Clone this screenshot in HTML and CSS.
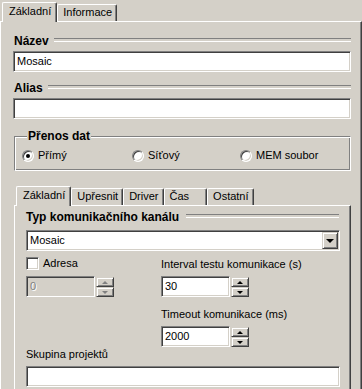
FILE: index.html
```html
<!DOCTYPE html>
<html lang="cs">

<head>
    <meta charset="utf-8">
    <meta name="viewport" content="width=device-width, initial-scale=1.0">
    <title>Kanál - vlastnosti</title>
    <link rel="stylesheet" href="styles.css">
</head>

<body>
    <div class="tabs">
        <div class="tab active">Základní</div>
        <div class="tab">Informace</div>
    </div>

    <div class="page outer">
        <div class="caption">Název</div>
        <div class="edit">Mosaic</div>

        <div class="caption alias">Alias</div>
        <div class="edit"></div>

        <fieldset class="group">
            <legend>Přenos dat</legend>
            <label class="radio"><span class="dot checked"></span>Přímý</label>
            <label class="radio"><span class="dot"></span>Síťový</label>
            <label class="radio"><span class="dot"></span>MEM soubor</label>
        </fieldset>

        <div class="tabs inner-tabs">
            <div class="tab active">Základní</div>
            <div class="tab">Upřesnit</div>
            <div class="tab">Driver</div>
            <div class="tab cas">Čas</div>
            <div class="tab">Ostatní</div>
        </div>

        <div class="page inner">
            <div class="caption typ">Typ komunikačního kanálu</div>
            <div class="combo">
                <span>Mosaic</span>
                <span class="btn drop"><span class="arrow down"></span></span>
            </div>

            <div class="cols">
                <div class="col">
                    <div class="row-top">
                        <label class="check"><span class="box"></span>Adresa</label>
                    </div>
                    <div class="spin disabled">
                        <div class="edit">0</div>
                        <div class="spin-btns">
                            <span class="btn"><span class="arrow up"></span></span>
                            <span class="btn"><span class="arrow down"></span></span>
                        </div>
                    </div>
                </div>
                <div class="col">
                    <div class="row-top">
                        <span class="lbl">Interval testu komunikace (s)</span>
                    </div>
                    <div class="spin">
                        <div class="edit">30</div>
                        <div class="spin-btns">
                            <span class="btn"><span class="arrow up"></span></span>
                            <span class="btn"><span class="arrow down"></span></span>
                        </div>
                    </div>
                    <div class="lbl timeout">Timeout komunikace (ms)</div>
                    <div class="spin">
                        <div class="edit">2000</div>
                        <div class="spin-btns">
                            <span class="btn"><span class="arrow up"></span></span>
                            <span class="btn"><span class="arrow down"></span></span>
                        </div>
                    </div>
                </div>
            </div>

            <div class="lbl skupina">Skupina projektů</div>
            <div class="edit"></div>
        </div>
    </div>
</body>

</html>
```

FILE: styles.css
```css
* {
    margin: 0;
    padding: 0;
    box-sizing: border-box;
}

body {
    background-color: #d4d0c8;
    font-family: "Liberation Sans", Arial, sans-serif;
    font-size: 11px;
    line-height: 13px;
    color: #000000;
    width: 362px;
    height: 389px;
    overflow: hidden;
}

/* zalozky */
.tabs {
    display: flex;
    align-items: flex-end;
    height: 21px;
    padding-left: 2px;
}

.tab {
    height: 17px;
    padding: 1px 4px 0 5px;
    border-top: 1px solid #ffffff;
    border-left: 1px solid #ffffff;
    border-right: 1px solid #404040;
    border-radius: 2px 2px 0 0;
    box-shadow: inset -1px 0 #808080;
    white-space: nowrap;
}

.tab.active {
    position: relative;
    z-index: 1;
    height: 20px;
    margin-bottom: -1px;
    padding: 2px 5px 0 6px;
    background-color: #d4d0c8;
}

.tab.cas {
    padding-right: 17px;
}

.page {
    border-top: 1px solid #ffffff;
    border-left: 1px solid #ffffff;
    border-right: 1px solid #404040;
    box-shadow: inset -1px 0 #808080;
}

.outer {
    padding: 12px 10px 20px 12px;
}

.inner {
    margin-left: 1px;
    padding: 4px 10px 20px 11px;
}

/* nadpis s carou */
.caption {
    display: flex;
    align-items: center;
    height: 14px;
    font-size: 12px;
    line-height: 14px;
    font-weight: bold;
    padding-left: 1px;
}

.caption::after {
    content: "";
    flex: 1;
    height: 2px;
    margin-top: -2px;
    margin-left: 5px;
    border-top: 1px solid #808080;
    border-bottom: 1px solid #ffffff;
}

.alias {
    margin-top: 9px;
}

.typ {
    padding-left: 0;
}

.typ::after {
    margin-left: 7px;
    margin-right: 1px;
}

/* vstupni pole */
.edit {
    height: 21px;
    margin-top: 3px;
    padding: 3px 3px 0 3px;
    background-color: #ffffff;
    border: 1px solid;
    border-color: #808080 #ffffff #ffffff #808080;
    box-shadow: inset 1px 1px #404040, inset -1px -1px #d4d0c8;
    white-space: nowrap;
}

/* skupina */
.group {
    margin: 10px 0 0 1px;
    padding: 6px 0 8px 7px;
    border: 1px solid;
    border-color: #808080 #ffffff #ffffff #808080;
    box-shadow: inset 1px 1px #ffffff, inset -1px -1px #808080;
    display: grid;
    grid-template-columns: 110px 108px 1fr;
}

.group legend {
    margin-left: 5px;
    padding: 0 1px;
    font-size: 12px;
    line-height: 14px;
    font-weight: bold;
    background-color: #d4d0c8;
}

.radio {
    display: flex;
    align-items: center;
    height: 13px;
    gap: 4px;
    white-space: nowrap;
}

.dot {
    position: relative;
    width: 12px;
    height: 12px;
    border-radius: 50%;
    background-color: #ffffff;
    border: 1px solid;
    border-color: #808080 #ffffff #ffffff #808080;
    box-shadow: inset 1px 1px #404040, inset -1px -1px #d4d0c8;
}

.dot.checked::after {
    content: "";
    position: absolute;
    left: 3px;
    top: 3px;
    width: 4px;
    height: 4px;
    border-radius: 50%;
    background-color: #000000;
}

.inner-tabs {
    margin-top: 13px;
    margin-left: 1px;
}

/* combo */
.combo {
    display: flex;
    align-items: center;
    justify-content: space-between;
    height: 21px;
    margin-top: 6px;
    padding: 1px 1px 1px 3px;
    background-color: #ffffff;
    border: 1px solid;
    border-color: #808080 #ffffff #ffffff #808080;
    box-shadow: inset 1px 1px #404040, inset -1px -1px #d4d0c8;
}

.btn {
    display: flex;
    align-items: center;
    justify-content: center;
    background-color: #d4d0c8;
    border: 1px solid;
    border-color: #d4d0c8 #404040 #404040 #d4d0c8;
    box-shadow: inset 1px 1px #ffffff, inset -1px -1px #808080;
}

.drop {
    width: 16px;
    height: 17px;
}

.arrow {
    width: 0;
    height: 0;
    border-left: 4px solid transparent;
    border-right: 4px solid transparent;
}

.arrow.down {
    border-top: 4px solid #000000;
}

.arrow.up {
    border-bottom: 4px solid #000000;
}

/* sloupce */
.cols {
    display: grid;
    grid-template-columns: 135px 1fr;
}

.row-top {
    display: flex;
    align-items: flex-end;
    height: 20px;
}

.check {
    display: flex;
    align-items: center;
    gap: 4px;
    margin-bottom: 1px;
}

.box {
    width: 13px;
    height: 13px;
    background-color: #ffffff;
    border: 1px solid;
    border-color: #808080 #ffffff #ffffff #808080;
    box-shadow: inset 1px 1px #404040, inset -1px -1px #d4d0c8;
}

.spin {
    display: flex;
    gap: 1px;
    margin-top: 5px;
}

.spin .edit {
    width: 69px;
    margin-top: 0;
}

.spin-btns {
    display: flex;
    flex-direction: column;
    padding-top: 1px;
}

.spin-btns .btn {
    width: 18px;
    height: 10px;
}

.spin-btns .arrow {
    border-left-width: 3px;
    border-right-width: 3px;
}

.spin-btns .arrow.up {
    border-bottom-width: 3px;
}

.spin-btns .arrow.down {
    border-top-width: 3px;
}

.disabled .edit {
    background-color: #d4d0c8;
    color: #808080;
    text-shadow: 1px 1px #ffffff;
}

.disabled .arrow.up {
    border-bottom-color: #808080;
}

.disabled .arrow.down {
    border-top-color: #808080;
}

.timeout {
    margin-top: 11px;
}

.skupina {
    margin-top: 1px;
}

.skupina + .edit {
    margin-top: 5px;
}
```
